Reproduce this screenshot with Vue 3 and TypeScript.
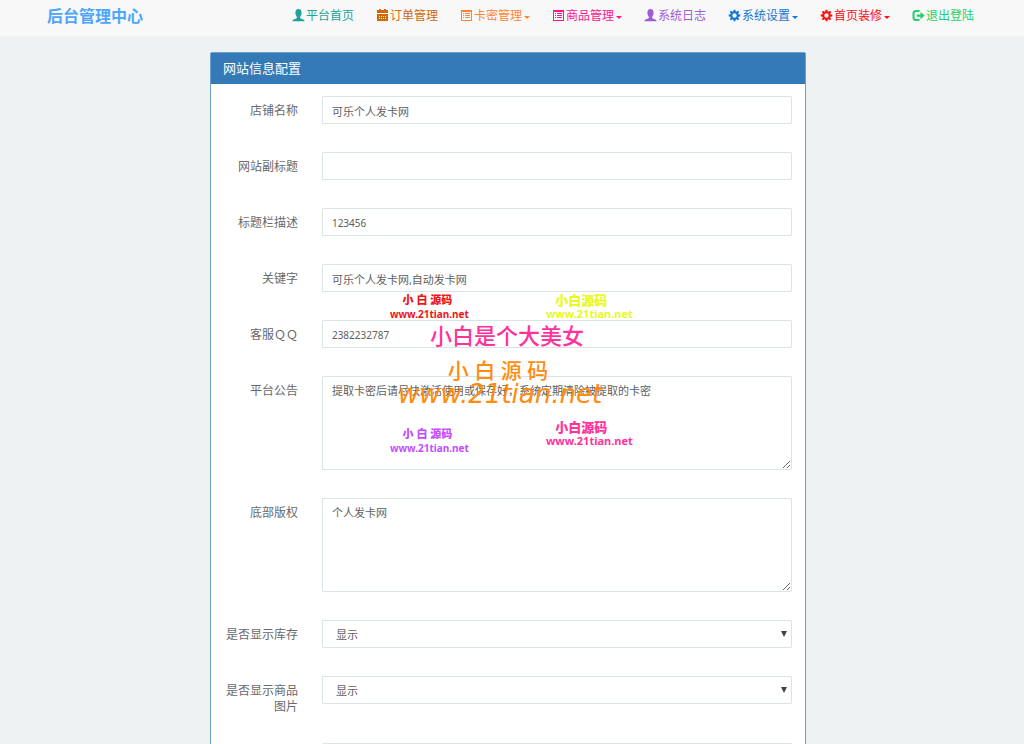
<script setup lang="ts">
import { ref } from 'vue'

interface NavItem {
  text: string
  icon: string
  tone: string
  menu: boolean
}
interface Field {
  id: string
  label: string
  kind: 'input' | 'textarea' | 'select'
  value: string
  numeric?: boolean
}

const nav: NavItem[] = [
  { text: '平台首页', icon: 'user', tone: 'teal', menu: false },
  { text: '订单管理', icon: 'calendar', tone: 'brown', menu: false },
  { text: '卡密管理', icon: 'list', tone: 'orange', menu: true },
  { text: '商品管理', icon: 'list', tone: 'pink', menu: true },
  { text: '系统日志', icon: 'user', tone: 'purple', menu: false },
  { text: '系统设置', icon: 'cog', tone: 'blue', menu: true },
  { text: '首页装修', icon: 'cog', tone: 'red', menu: true },
  { text: '退出登陆', icon: 'logout', tone: 'green', menu: false },
]

const teeth = [0, 45, 90, 135, 180, 225, 270, 315]

const fields = ref<Field[]>([
  { id: 'shop-name', label: '店铺名称', kind: 'input', value: '可乐个人发卡网' },
  { id: 'subtitle', label: '网站副标题', kind: 'input', value: '' },
  { id: 'title-desc', label: '标题栏描述', kind: 'input', value: '123456', numeric: true },
  { id: 'keywords', label: '关键字', kind: 'input', value: '可乐个人发卡网,自动发卡网' },
  { id: 'service-qq', label: '客服ＱＱ', kind: 'input', value: '2382232787', numeric: true },
  { id: 'notice', label: '平台公告', kind: 'textarea', value: '提取卡密后请尽快激活使用或保存好，系统定期清除被提取的卡密' },
  { id: 'copyright', label: '底部版权', kind: 'textarea', value: '个人发卡网' },
  { id: 'show-stock', label: '是否显示库存', kind: 'select', value: '显示' },
  { id: 'show-image', label: '是否显示商品图片', kind: 'select', value: '显示' },
  { id: 'extra', label: '', kind: 'input', value: '' },
])
</script>

<template>
  <div class="page">
    <header class="navbar">
      <a class="brand" href="#">后台管理中心</a>
      <nav class="menu">
        <a v-for="item in nav" :key="item.text" href="#" class="item" :class="item.tone">
          <svg class="icon" viewBox="0 0 14 14" aria-hidden="true">
            <path v-if="item.icon === 'user'" d="M6.500 0C4.500 0 3.400 1.500 3.400 3.800C3.400 5.500 4 7 4.900 7.900V9.100C4.500 9.900 .5 10.400 .5 11.800V12.300H12.500V11.800C12.500 10.400 8.500 9.900 8.100 9.100V7.900C9 7 9.600 5.500 9.600 3.800C9.600 1.500 8.500 0 6.500 0Z" />
            <g v-else-if="item.icon === 'calendar'">
              <path d="M1 1H3V0H5V1H8V0H10V1H12V4H1Z" />
              <path fill-rule="evenodd" d="M1 5H12V12H1ZM3 7V8H4V7ZM5 7V8H6V7ZM7 7V8H8V7ZM9 7V8H10V7ZM3 9V10H4V9ZM5 9V10H6V9ZM7 9V10H8V9ZM9 9V10H10V9Z" />
            </g>
            <path v-else-if="item.icon === 'list'" fill-rule="evenodd" d="M1 1H12V12H1ZM2 3V11H11V3ZM3 4H4V5H3ZM5 4H10V5H5ZM3 6H4V7H3ZM5 6H10V7H5ZM3 8H4V9H3ZM5 8H10V9H5Z" />
            <g v-else-if="item.icon === 'cog'">
              <circle cx="6.500" cy="6.500" r="3.200" fill="none" stroke="currentColor" stroke-width="2" />
              <path v-for="a in teeth" :key="a" d="M5.600 .7H7.400L7.800 3.200H5.200Z" :transform="`rotate(${a} 6.500 6.500)`" />
            </g>
            <g v-else>
              <path d="M7.500 2H4Q1.500 2 1.500 4.500V8.500Q1.500 11 4 11H7.500" fill="none" stroke="currentColor" stroke-width="2" />
              <path d="M4.800 5.400H8.500V3L12.700 6.600L8.500 10.200V7.800H4.800Z" />
            </g>
          </svg>
          <span>{{ item.text }}</span>
          <i v-if="item.menu" class="caret"></i>
        </a>
      </nav>
    </header>

    <main class="panel">
      <h1 class="panel-title">网站信息配置</h1>
      <form class="panel-body" @submit.prevent>
        <div v-for="f in fields" :key="f.id" class="row">
          <label :for="f.id">{{ f.label }}</label>
          <input v-if="f.kind === 'input'" :id="f.id" v-model="f.value" type="text" class="control" :class="{ numeric: f.numeric }" />
          <textarea v-else-if="f.kind === 'textarea'" :id="f.id" v-model="f.value" class="control area"></textarea>
          <div v-else class="select-box">
            <select :id="f.id" v-model="f.value" class="control select">
              <option>显示</option>
              <option>不显示</option>
            </select>
            <svg class="arrow" viewBox="0 0 6 6" aria-hidden="true"><path d="M0 0H6L3 6Z" /></svg>
          </div>
        </div>
        <div class="marks" aria-hidden="true">
          <div class="mark small hand m-red"><b>小 白 源码</b><span>www.21tian.net</span></div>
          <div class="mark small m-yellow"><b>小白源码</b><span>www.21tian.net</span></div>
          <div class="mark headline">小白是个大美女</div>
          <div class="mark large"><b>小 白 源 码</b><span>www.21tian.net</span></div>
          <div class="mark small hand m-violet"><b>小 白 源码</b><span>www.21tian.net</span></div>
          <div class="mark small m-pink"><b>小白源码</b><span>www.21tian.net</span></div>
        </div>
      </form>
    </main>
  </div>
</template>

<style>
body {
  background: #eef2f3;
}
</style>

<style scoped>
.page {
  min-height: 100vh;
  background: #eef2f3;
  color: #676a6c;
  font-family: "Noto Sans", "Noto Sans CJK SC", sans-serif;
  font-size: 12px;
}
.page * {
  box-sizing: border-box;
}
.navbar {
  display: flex;
  justify-content: space-between;
  align-items: center;
  height: 36px;
  padding: 0 50px 4px 47px;
  background: #f8f8f8;
}
.brand {
  color: #4ea5fb;
  font-size: 16px;
  font-weight: 700;
  line-height: 24px;
  text-decoration: none;
}
.menu {
  display: flex;
  gap: 22px;
}
.item {
  display: flex;
  align-items: center;
  line-height: 20px;
  white-space: nowrap;
  text-decoration: none;
}
.icon {
  width: 14px;
  height: 14px;
  fill: currentColor;
}
.caret {
  margin: 3px 0 0 2px;
  border: 3px solid transparent;
  border-top-color: currentColor;
  border-bottom: 0;
}
.teal { color: #1ea39a; }
.brown { color: #cf6a0a; }
.orange { color: #ff8533; }
.pink { color: #ff1493; }
.purple { color: #9f5bd8; }
.blue { color: #1277d3; }
.red { color: #ff1010; }
.green { color: #1fd06b; }
.panel {
  width: 58.2%;
  margin: 16px 0 0 20.5%;
  background: #fff;
  border: 1px solid #6ba0d0;
  border-radius: 2px;
}
.panel-title {
  margin: 0;
  padding: 5px 12px 6px;
  background: #337ab7;
  color: #fff;
  font-size: 13px;
  font-weight: 400;
  line-height: 20px;
}
.panel-body {
  position: relative;
  display: flex;
  flex-direction: column;
  gap: 28px;
  padding: 12px 13px 28px 12px;
}
.row {
  display: grid;
  grid-template-columns: 75px 1fr;
  column-gap: 24px;
  align-items: start;
}
.row label {
  padding: 7px 0 0;
  line-height: 16px;
  text-align: right;
}
.control {
  display: block;
  width: 100%;
  height: 28px;
  margin: 0;
  padding: 5px 9px 4px;
  border: 1px solid #dae3e6;
  border-radius: 1px;
  outline: 0;
  background: #fff;
  color: #606060;
  font: inherit;
  font-size: 11px;
  line-height: 18px;
}
.numeric {
  font-size: 10px;
}
.area {
  height: 94px;
  resize: vertical;
}
.select-box {
  position: relative;
}
.select {
  padding-left: 13px;
  appearance: none;
}
.arrow {
  position: absolute;
  top: 11px;
  right: 5px;
  width: 6px;
  height: 6px;
  fill: #444;
  pointer-events: none;
}
.marks {
  position: absolute;
  inset: 0;
  pointer-events: none;
}
.mark {
  position: absolute;
  display: flex;
  flex-direction: column;
  align-items: center;
  white-space: nowrap;
  font-weight: 700;
}
.small {
  font-size: 11px;
  line-height: 14px;
}
.small b {
  padding-right: 16px;
  font-size: 13px;
}
.hand {
  font-size: 10px;
}
.hand b {
  padding-right: 4px;
  font-size: 11px;
}
.m-red { top: 209px; left: 179px; color: #f01414; }
.m-yellow { top: 209px; left: 335px; color: #e8fa22; }
.m-violet { top: 343px; left: 179px; color: #c44dff; }
.m-pink { top: 336px; left: 335px; color: #ff3399; }
.headline {
  top: 235px;
  left: 219px;
  color: #ff3399;
  font-size: 22px;
  font-weight: 500;
  line-height: 32px;
}
.large {
  top: 273px;
  left: 187px;
  color: #ff8c0f;
  font-size: 26px;
  line-height: 26px;
}
.large b {
  padding-right: 4px;
  font-size: 21px;
  font-weight: 500;
}
.large span {
  font-family: "DejaVu Sans", sans-serif;
  font-style: italic;
  font-weight: 400;
  line-height: 22px;
}
</style>
